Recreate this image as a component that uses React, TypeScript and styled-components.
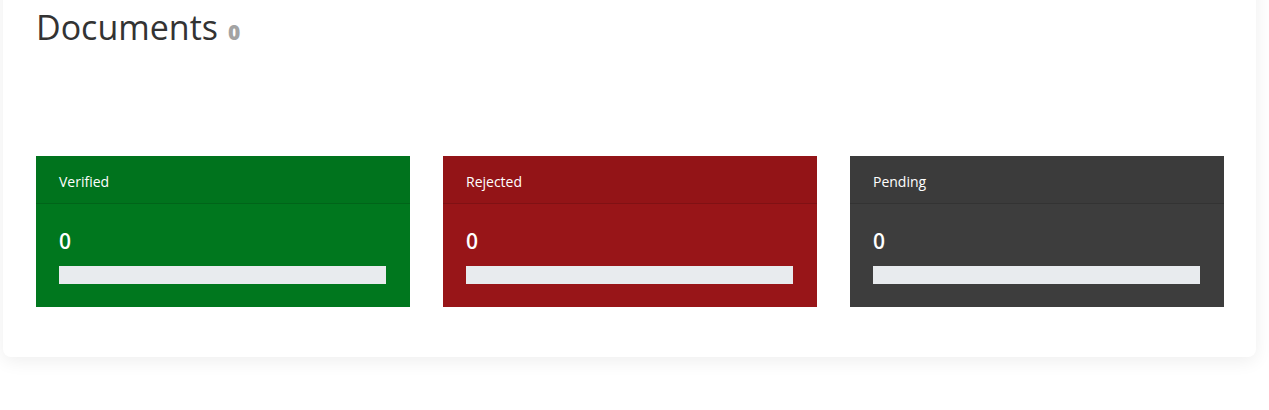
import React from "react";
import styled, { createGlobalStyle } from "styled-components";

const GlobalStyle = createGlobalStyle`
  body {
    margin: 0;
    background-color: #ffffff;
    font-family: "Open Sans", "Liberation Sans", sans-serif;
  }
`;

const Page = styled.div`
  padding: 0 13px 40px 3px;
`;

const Panel = styled.section`
  margin-top: -25px;
  padding: 30px 32px 50px 33px;
  background-color: #ffffff;
  border-radius: 8px;
  box-shadow: 0 4px 18px rgba(0, 0, 0, 0.07);
`;

const Title = styled.h2`
  margin: 0;
  display: flex;
  align-items: baseline;
  gap: 10px;
  font-size: 34px;
  font-weight: 500;
  line-height: 44px;
  color: #333333;
`;

const Count = styled.span`
  font-size: 21px;
  font-weight: 800;
  color: #a3a3a3;
`;

const Grid = styled.div`
  margin-top: 102px;
  display: grid;
  grid-template-columns: repeat(3, 1fr);
  gap: 33px;
`;

const StatCard = styled.div<{ $bg: string }>`
  background-color: ${(p) => p.$bg};
  color: #ffffff;
`;

const CardHeader = styled.div`
  height: 48px;
  box-sizing: border-box;
  display: flex;
  align-items: center;
  padding: 3px 23px 0;
  font-size: 14px;
  background-color: rgba(0, 0, 0, 0.03);
  border-bottom: 1px solid rgba(0, 0, 0, 0.125);
`;

const CardBody = styled.div`
  padding: 23px 24px 23px 23px;
`;

const Value = styled.div`
  font-size: 21px;
  font-weight: 600;
  line-height: 28px;
`;

const Bar = styled.div`
  margin-top: 11px;
  height: 18px;
  background-color: #e8ebee;
`;

const stats = [
  { label: "Verified", value: 0, bg: "#00771e" },
  { label: "Rejected", value: 0, bg: "#981518" },
  { label: "Pending", value: 0, bg: "#3d3d3d" },
];

export default function App() {
  return (
    <Page>
      <GlobalStyle />
      <Panel>
        <Title>
          Documents <Count>0</Count>
        </Title>
        <Grid>
          {stats.map((s) => (
            <StatCard key={s.label} $bg={s.bg}>
              <CardHeader>{s.label}</CardHeader>
              <CardBody>
                <Value>{s.value}</Value>
                <Bar />
              </CardBody>
            </StatCard>
          ))}
        </Grid>
      </Panel>
    </Page>
  );
}
